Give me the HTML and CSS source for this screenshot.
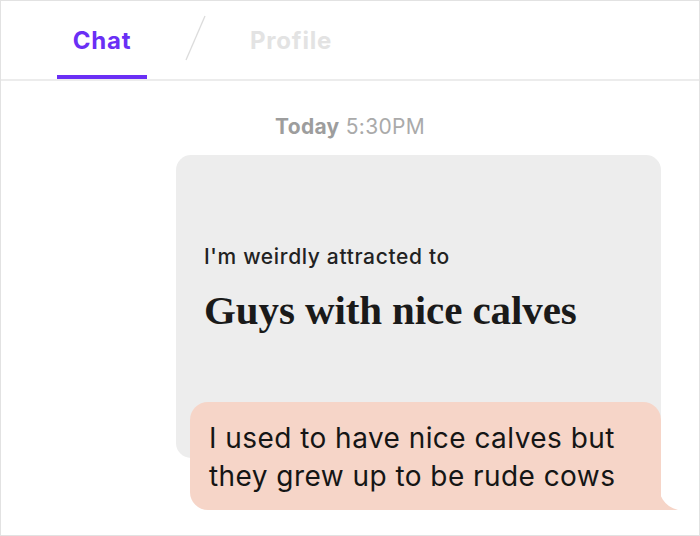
FILE: index.html
```html
<!DOCTYPE html>
<html>
<head>
<meta charset="utf-8">
<link rel="stylesheet" href="styles.css">
</head>
<body>
<div class="frame">
  <header class="tabs">
    <div class="tab active">Chat</div>
    <svg class="slash" width="22" height="46" viewBox="0 0 22 46"><line x1="2" y1="45" x2="21" y2="1" stroke="#dcdcdc" stroke-width="1.3"/></svg>
    <div class="tab">Profile</div>
  </header>
  <main class="chat">
    <div class="stamp"><b>Today</b> 5:30PM</div>
    <div class="prompt">
      <div class="prompt-label">I'm weirdly attracted to</div>
      <div class="prompt-answer">Guys with nice calves</div>
    </div>
    <div class="reply">
      <p>I used to have nice calves but<br>they grew up to be rude cows</p>
      <svg class="tail" width="22" height="30" viewBox="0 0 22 30"><path d="M0 0 C0 16 6 26 20 30 L0 30 Z" fill="#f6d5c8"/></svg>
    </div>
  </main>
</div>
</body>
</html>
```
FILE: styles.css
```css
* { box-sizing: border-box; }
html, body { margin: 0; padding: 0; background: #fff; }
.frame {
  width: 700px;
  height: 536px;
  border: 1px solid #e2e2e2;
  font-family: "Inter", "Noto Sans", sans-serif;
  overflow: hidden;
}
.tabs {
  height: 80px;
  border-bottom: 2px solid #ececec;
  display: flex;
  align-items: flex-end;
  padding-left: 56px;
}
.tab {
  font-weight: 700;
  font-size: 24px;
  letter-spacing: 0.8px;
  color: #e3e3e3;
  height: 78px;
  display: flex;
  align-items: center;
  padding: 0 16px 0 0;
}
.tab.active {
  color: #6a2ff5;
  width: 90px;
  justify-content: center;
  padding: 0;
  border-bottom: 4px solid #6a2ff5;
  padding-top: 4px;
}
.slash { margin: 0 44px 0 37px; align-self: center; margin-top: -4px; }
.chat {
  padding-top: 33px;
  position: relative;
}
.stamp {
  text-align: center;
  font-size: 21px;
  letter-spacing: 0.3px;
  color: #aaaaaa;
  line-height: 26px;
}
.stamp b { color: #9d9d9d; font-weight: 700; }
.prompt {
  margin: 15px 0 0 175px;
  width: 485px;
  height: 303px;
  background: #ededed;
  border-radius: 15px;
  padding: 89px 28px 0 28px;
}
.prompt-label {
  font-size: 21px;
  font-weight: 500;
  letter-spacing: 0.65px;
  color: #222;
  line-height: 26px;
}
.prompt-answer {
  font-family: "Liberation Serif", "DejaVu Serif", serif;
  font-weight: 700;
  font-size: 41px;
  color: #1a1a1a;
  margin-top: 18px;
  letter-spacing: -0.1px;
  line-height: 44px;
}
.reply {
  position: relative;
  margin: -56px 0 0 189px;
  width: 471px;
  background: #f6d5c8;
  border-radius: 18px 18px 0 18px;
  padding: 17px 18px 15px 19px;
}
.reply p {
  margin: 0;
  font-size: 28px;
  letter-spacing: 0.45px;
  line-height: 38px;
  color: #151515;
}
.tail { position: absolute; right: -19px; bottom: 0; }
```
